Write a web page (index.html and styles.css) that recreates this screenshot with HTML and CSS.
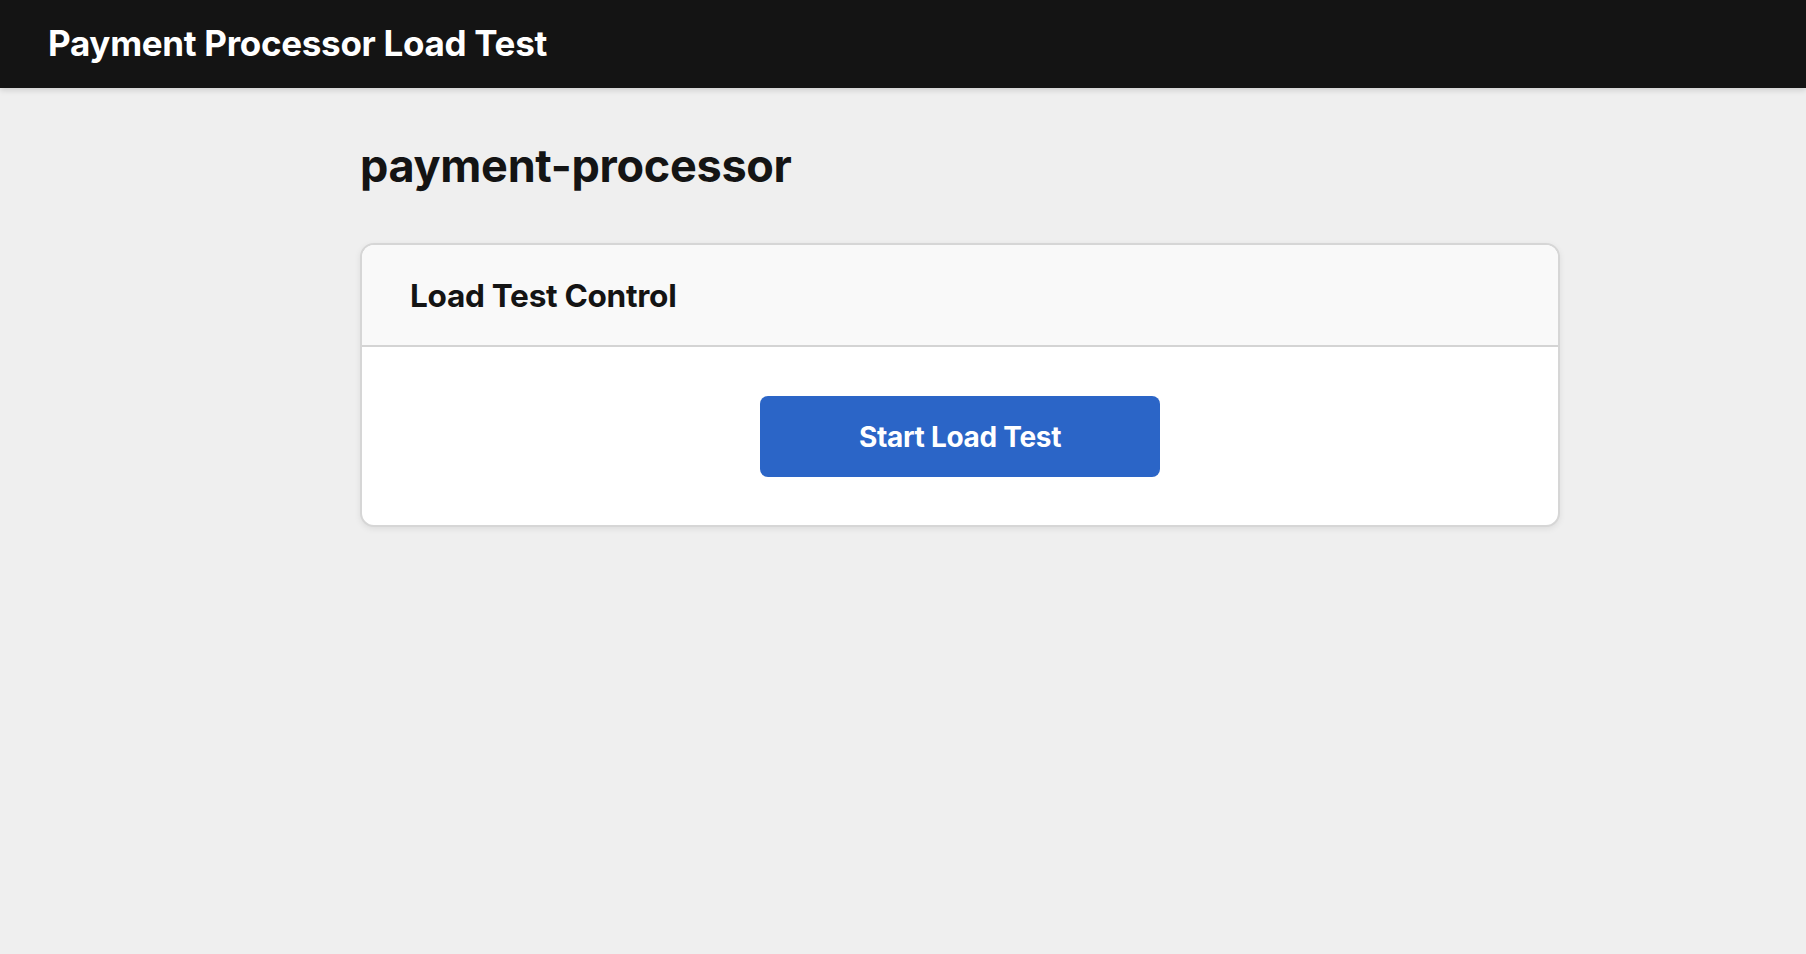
FILE: index.html
```html
<!DOCTYPE html>
<html lang="en">
<head>
<meta charset="utf-8">
<title>Payment Processor Load Test</title>
<link rel="stylesheet" href="styles.css">
</head>
<body>
<header class="topbar">
  <div class="topbar-title">Payment Processor Load Test</div>
</header>
<main class="main">
  <h1 class="page-title">payment-processor</h1>
  <section class="card">
    <div class="card-header">
      <h2 class="card-title">Load Test Control</h2>
    </div>
    <div class="card-body">
      <button class="btn-primary" type="button">Start Load Test</button>
    </div>
  </section>
</main>
</body>
</html>
```

FILE: styles.css
```css
* { box-sizing: border-box; }
html, body { margin: 0; padding: 0; }
body {
  background: #efefef;
  color: #141414;
  font-family: Inter, "Noto Sans", "Liberation Sans", sans-serif;
  min-height: 954px;
}
.topbar {
  background: #141414;
  height: 88px;
  display: flex;
  align-items: center;
  padding: 0 48px;
  box-shadow: 0 2px 6px rgba(0,0,0,0.15);
}
.topbar-title {
  color: #ffffff;
  font-size: 35px;
  font-weight: 700;
  letter-spacing: -0.3px;
  margin-top: -2px;
}
.main {
  width: 1200px;
  margin-left: 360px;
  padding-top: 47px;
}
.page-title {
  margin: 0 0 46px 0;
  font-size: 45px;
  font-weight: 700;
  letter-spacing: -0.3px;
  line-height: 62px;
}
.card {
  background: #ffffff;
  border: 2px solid #d6d6d6;
  border-radius: 14px;
  box-shadow: 0 2px 6px rgba(0,0,0,0.08);
  overflow: hidden;
}
.card-header {
  background: #f9f9f9;
  border-bottom: 2px solid #d4d4d4;
  height: 102px;
  display: flex;
  align-items: center;
  padding: 0 48px;
}
.card-title {
  margin: 0;
  font-size: 31.6px;
  font-weight: 700;
  letter-spacing: -0.3px;
}
.card-body {
  display: flex;
  justify-content: center;
  padding: 49px 0 48px;
}
.btn-primary {
  width: 400px;
  height: 81px;
  background: #2b65c7;
  color: #ffffff;
  border: none;
  border-radius: 8px;
  font-family: inherit;
  font-size: 28px;
  font-weight: 700;
  letter-spacing: -0.3px;
}
```
